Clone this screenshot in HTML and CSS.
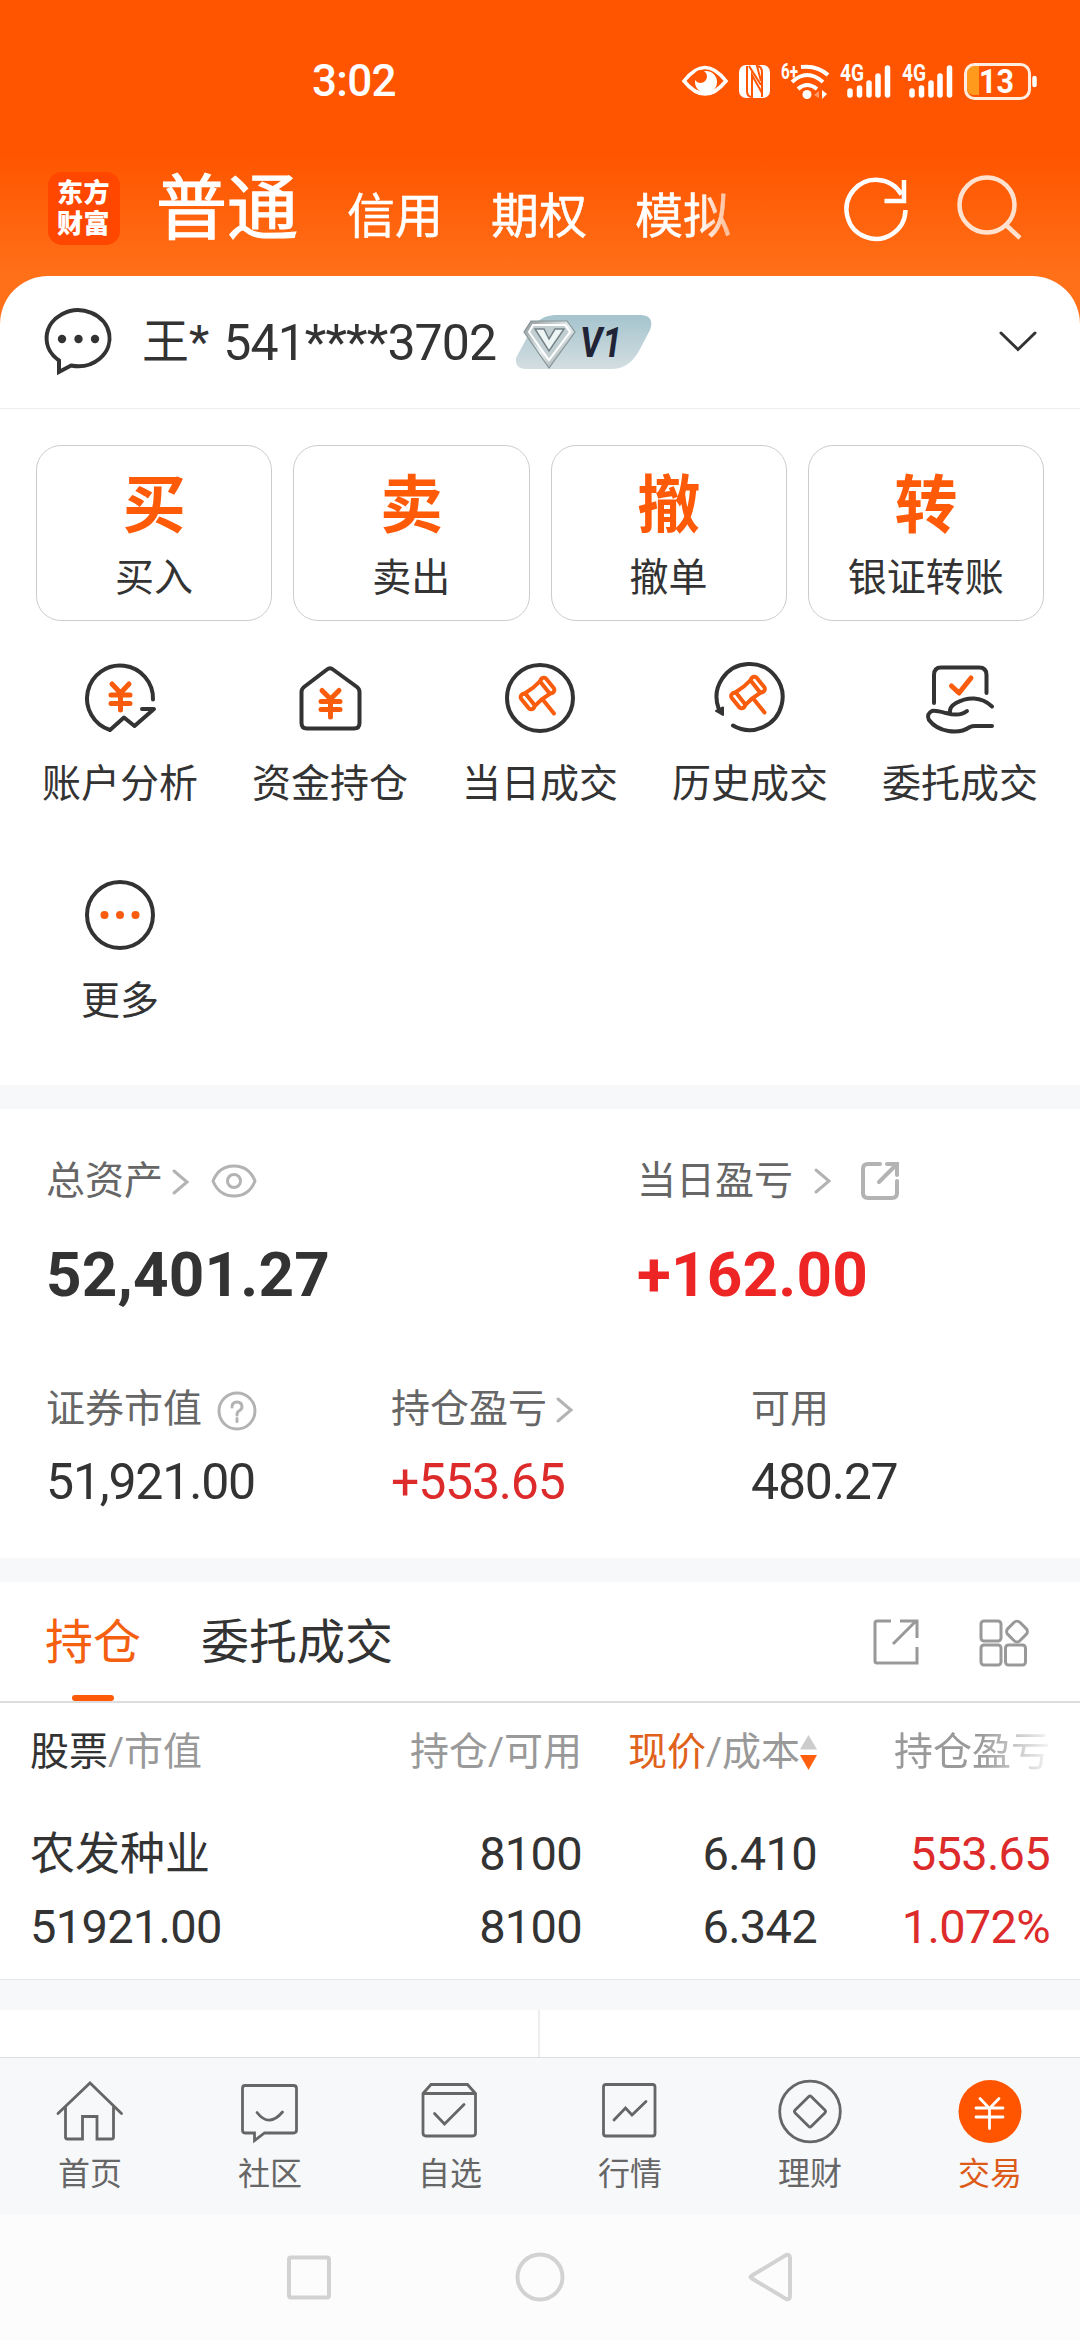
FILE: index.html
```html
<!DOCTYPE html>
<html lang="zh-CN">
<head>
  <meta charset="UTF-8" />
  <title>交易</title>
  <meta name="viewport" content="width=device-width, initial-scale=1.0" />
  <link rel="stylesheet" href="styles.css">
</head>
<body>
  <div class="app">
    <div class="status">
      <span class="time">3:02</span>
      <div class="status-icons">
        <svg width="48" height="40" viewBox="0 0 48 40"><path d="M3 20Q24-7 45 20Q24 46 3 20Z" fill="none" stroke="#fff" stroke-width="3.6"/><circle cx="25" cy="21" r="11" fill="#fff"/><circle cx="19.500" cy="15.500" r="6.500" fill="#ff5500"/></svg>
        <svg class="nfc" width="32" height="40" viewBox="0 0 32 40"><rect x="0" y="4" width="31" height="33" rx="7" fill="#fff"/><path d="M8 5V30Q8 36 13 36V14L23 32M23 36V12Q23 5 18 5L22 20M10 5L22 24" fill="none" stroke="#ff5500" stroke-width="2"/></svg>
        <svg class="wifi" width="50" height="40" viewBox="0 0 50 40"><text x="0" y="18" font-size="22" font-weight="bold" fill="#fff" textLength="17" lengthAdjust="spacingAndGlyphs">6+</text><g fill="none" stroke="#fff" stroke-width="4"><path d="M20 6Q36 4 47 14"/><path d="M11 21Q26 7 42 21"/><path d="M17 28Q26 20 36 28"/></g><circle cx="26" cy="33.500" r="4.500" fill="#fff"/><path d="M41 29v9l5-5z" fill="#fff"/><path d="M38 30v7l-5-3z" fill="#ff9a66"/></svg>
        <svg class="signal" width="51" height="40" viewBox="0 0 51 40"><text x="0" y="20" font-size="23" font-weight="bold" fill="#fff" textLength="24" lengthAdjust="spacingAndGlyphs">4G</text><path d="M10 30v4M19.500 27v7M29 22v12M38 15v19M47.500 7v27" stroke="#fff" stroke-width="5.500" stroke-linecap="round"/></svg>
        <svg class="signal" width="51" height="40" viewBox="0 0 51 40"><text x="0" y="20" font-size="23" font-weight="bold" fill="#fff" textLength="24" lengthAdjust="spacingAndGlyphs">4G</text><path d="M10 30v4M19.500 27v7M29 22v12M38 15v19M47.500 7v27" stroke="#fff" stroke-width="5.500" stroke-linecap="round"/></svg>
        <svg class="battery" width="74" height="40" viewBox="0 0 74 40"><path d="M15 5H10Q3 5 3 12V27Q3 34 10 34H15Z" fill="#ff9a1c"/><rect x="1.500" y="3.500" width="64" height="34" rx="9" fill="none" stroke="#ffeee0" stroke-width="3"/><path d="M70.500 17v7" stroke="#fff" stroke-width="4.500" stroke-linecap="round"/><text x="15" y="32" font-size="33" font-weight="bold" fill="#fff" textLength="35" lengthAdjust="spacingAndGlyphs">13</text></svg>
      </div>
    </div>

    <div class="header">
      <div class="logo">东方<br>财富</div>
      <div class="modes">
        <span class="mode on">普通</span>
        <span class="mode">信用</span>
        <span class="mode">期权</span>
        <span class="mode">模拟</span>
      </div>
      <svg class="refresh" width="72" height="72" viewBox="0 0 72 72"><path d="M65.500 37A29.500 29.500 0 1 1 61.500 21.500M64 7V28H44.500" fill="none" stroke="#fff" stroke-width="4.500"/></svg>
      <svg class="search" width="72" height="72" viewBox="0 0 72 72"><circle cx="31" cy="32" r="27.500"/><path d="M50 52L64 65"/></svg>
    </div>

    <div class="sheet">
      <div class="account">
        <svg width="72" height="72" viewBox="0 0 72 72"><path d="M16 54.500A31.500 28 0 1 1 28 59.500L16 66Z" fill="none" stroke="#333" stroke-width="4"/><g fill="#333"><circle cx="19" cy="33" r="4.200"/><circle cx="35.500" cy="33" r="4.200"/><circle cx="52" cy="33" r="4.200"/></g></svg>
        <span class="name">王*</span>
        <span class="number">541****3702</span>
        <svg class="badge" width="142" height="60" viewBox="0 0 142 60">
          <defs>
            <linearGradient id="badge" x1="0" y1="0" x2="0" y2="1"><stop offset="0" stop-color="#a5c4cd"/><stop offset="1" stop-color="#d3dee1"/></linearGradient>
            <linearGradient id="gem" x1="0" y1="0" x2="1" y2="1"><stop offset="0" stop-color="#8b9699"/><stop offset=".5" stop-color="#e8f0f1"/><stop offset="1" stop-color="#7f898c"/></linearGradient>
          </defs>
          <path d="M3 46L18 18Q26 3 44 3H128Q142 4 137 18L126 39Q116 57 98 57H13Q2 57 3 46Z" fill="url(#badge)"/>
          <path d="M18 9H54L62 20L36 56L11 20Z" fill="url(#gem)" stroke="#879397" stroke-width="1.200"/>
          <path d="M20 13H52L57 20L36 48L16 20Z" fill="#c2cfd2" stroke="#fff" stroke-width="2"/>
          <path d="M22 17H31L36 27L42 17H51L36 39Z" fill="#edf5f5" stroke="#758388" stroke-width="1.500"/>
          <text x="67" y="45" font-size="42" font-weight="bold" font-style="italic" fill="#202436" textLength="42" lengthAdjust="spacingAndGlyphs">V1</text>
        </svg>
        <svg class="down" width="40" height="24" viewBox="0 0 40 24"><path d="M3 3L20 19.500L37 3" fill="none" stroke="#333" stroke-width="3" stroke-linecap="round"/></svg>
      </div>

      <div class="actions">
        <div class="action"><b>买</b><span>买入</span></div>
        <div class="action"><b>卖</b><span>卖出</span></div>
        <div class="action"><b>撤</b><span>撤单</span></div>
        <div class="action"><b>转</b><span>银证转账</span></div>
      </div>

      <div class="tools">
        <div class="tool">
          <svg class="line" width="72" height="72" viewBox="0 0 72 72"><path d="M69 37.500A33 33 0 1 0 26 68L40 55.500L50.500 64L70 47H58"/><path class="accent yen" d="M28 22L36.500 31L45 22M36.500 31V48M27 33H46M27 41.500H46"/></svg>
          <span>账户分析</span>
        </div>
        <div class="tool">
          <svg class="line" width="72" height="72" viewBox="0 0 72 72"><path d="M33 7.500Q36 5 39 7.500L63 25Q65.500 27 65.500 30V61Q65.500 66.500 60 66.500H13Q7.500 66.500 7.500 61V30Q7.500 27 10 25Z"/><path class="accent yen" d="M28 28.500L36.500 37L45 28.500M36.500 37V55M27 39.500H46M27 47.500H46"/></svg>
          <span>资金持仓</span>
        </div>
        <div class="tool">
          <svg class="line" width="72" height="72" viewBox="0 0 72 72"><circle cx="36" cy="36" r="33"/><g class="accent" transform="translate(33.5 31.5) rotate(-39)"><rect x="-16" y="-9" width="6.500" height="18" rx="3"/><rect x="9.500" y="-9" width="6.500" height="18" rx="3"/><path d="M-10-8Q0-6.500 10-8M-10 8Q0 6.500 10 8"/></g><path class="accent" d="M39.500 38.500L50 51.500"/></svg>
          <span>当日成交</span>
        </div>
        <div class="tool">
          <svg class="line" width="72" height="72" viewBox="0 0 72 72"><path d="M19 63.500A33 33 0 1 0 4.500 46"/><path d="M2 49L9 45.500V53Z" fill="#333" stroke-width="2"/><g class="accent" transform="translate(34 30.500) rotate(-39)"><rect x="-16" y="-9" width="6.500" height="18" rx="3"/><rect x="9.500" y="-9" width="6.500" height="18" rx="3"/><path d="M-10-8Q0-6.500 10-8M-10 8Q0 6.500 10 8"/></g><path class="accent" d="M40 37.500L50.500 50.500"/></svg>
          <span>历史成交</span>
        </div>
        <div class="tool">
          <svg class="line" width="72" height="72" viewBox="0 0 72 72"><path d="M10 41V13Q10 5.500 17 5.500H55Q62.500 5.500 62.500 13V31"/><path d="M68 44.500C57 34 43 35 32 41Q25 45 26 51M43 49Q36 55 22 51C14 49 11 48 8 49Q2 52 5 58C14 70 34 73 46 65Q48 64 51 64H68"/><path class="accent yen" d="M27.500 24L35 31L47 16"/></svg>
          <span>委托成交</span>
        </div>
        <div class="tool">
          <svg class="line" width="72" height="72" viewBox="0 0 72 72"><circle cx="36" cy="36" r="33"/><g fill="#f95c0c" stroke="none"><circle cx="20.500" cy="36" r="4"/><circle cx="36" cy="36" r="4"/><circle cx="51.500" cy="36" r="4"/></g></svg>
          <span>更多</span>
        </div>
      </div>

      <div class="assets">
        <div class="totals">
          <div class="total">
            <div class="label">总资产<svg class="more" width="18" height="28" viewBox="0 0 18 28"><path d="M2 3L15 14L2 25"/></svg><svg class="eye" width="46" height="36" viewBox="0 0 46 36"><path d="M2 18Q8 3 23 3T44 18Q38 33 23 33T2 18Z"/><circle cx="23" cy="18" r="6.500"/></svg></div>
            <strong>52,401.27</strong>
          </div>
          <div class="total today">
            <div class="label">当日盈亏<svg class="more" width="18" height="28" viewBox="0 0 18 28"><path d="M2 3L15 14L2 25"/></svg><svg class="share" width="40" height="40" viewBox="0 0 40 40"><path d="M20 3H8Q3 3 3 8V32Q3 37 8 37H32Q37 37 37 32V20M19 21L36 4M27 3H37V14"/></svg></div>
            <strong class="red">+162.00</strong>
          </div>
        </div>
        <div class="details">
          <div>
            <div class="label">证券市值<svg class="help" width="40" height="40" viewBox="0 0 40 40"><circle cx="20" cy="20" r="18"/><path d="M15 16Q15 11 20 11Q25 11 25 16Q25 18 22 20Q20 21 20 24M20 27.500V30.500"/></svg></div>
            <span class="value">51,921.00</span>
          </div>
          <div>
            <div class="label">持仓盈亏<svg class="more" width="18" height="28" viewBox="0 0 18 28"><path d="M2 3L15 14L2 25"/></svg></div>
            <span class="value red">+553.65</span>
          </div>
          <div>
            <div class="label">可用</div>
            <span class="value">480.27</span>
          </div>
        </div>
      </div>

      <div class="tabs">
        <span class="tab on">持仓</span>
        <span class="tab">委托成交</span>
        <svg class="open" width="48" height="48" viewBox="0 0 48 48"><path d="M19 3H5Q3 3 3 5V43Q3 45 5 45H45V29M21 26L44 3M28 3H45V20"/></svg>
        <svg class="grid" width="52" height="52" viewBox="0 0 52 52"><rect x="3" y="4" width="20" height="20" rx="3"/><rect x="3" y="28" width="20" height="20" rx="3"/><rect x="27.500" y="28" width="20" height="20" rx="3"/><rect x="30.500" y="6" width="17" height="17" rx="4" transform="rotate(45 39 14.5)"/></svg>
      </div>

      <div class="holdings">
        <div class="row head">
          <span><i>股票</i>/市值</span>
          <span>持仓/可用</span>
          <span class="price"><em>现价</em>/成本<svg width="17" height="36" viewBox="0 0 17 36"><path d="M8.500 1L17 15.500H0Z" fill="#ccc"/><path d="M8.500 36L17 21H0Z" fill="#ff6010"/></svg></span>
          <span class="fade">持仓盈亏</span>
        </div>
        <div class="row first"><span class="stock">农发种业</span><span>8100</span><span>6.410</span><span class="red">553.65</span></div>
        <div class="row"><span>51921.00</span><span>8100</span><span>6.342</span><span class="red">1.072%</span></div>
      </div>
      <div class="split"><div></div><div></div></div>
    </div>

    <div class="tabbar">
      <div class="nav">
        <svg width="72" height="72" viewBox="0 0 72 72"><path d="M4 38.500L36 8L67.500 38.500M11.500 32V62Q11.500 64 13.500 64H28.500V41.500H43V64H57.500Q59.500 64 59.500 62V32"/></svg>
        <span>首页</span>
      </div>
      <div class="nav">
        <svg width="72" height="72" viewBox="0 0 72 72"><path d="M11 10.500H59.500Q62.500 10.500 62.500 13.500V55Q62.500 58 59.500 58H30.500L20.500 65.500V58H11Q8.500 58 8.500 55V13.500Q8.500 10.500 11 10.500Z"/><path d="M23 37.500Q35 53 48.500 37"/></svg>
        <span>社区</span>
      </div>
      <div class="nav">
        <svg width="72" height="72" viewBox="0 0 72 72"><path d="M9 18.500L17 9.500H53.500L61.500 18.500V58Q61.500 61 58.500 61H12Q9 61 9 58ZM9 18.500H61.500M20.500 38.500L30.500 49L50 29.500"/></svg>
        <span>自选</span>
      </div>
      <div class="nav">
        <svg width="72" height="72" viewBox="0 0 72 72"><rect x="9.500" y="9.500" width="51.500" height="51.500" rx="2.500"/><path d="M20 45L31.500 33L38 40L52 26.500"/></svg>
        <span>行情</span>
      </div>
      <div class="nav">
        <svg width="72" height="72" viewBox="0 0 72 72"><circle cx="36" cy="36.500" r="30.300"/><rect x="24.500" y="25" width="23" height="23" rx="2" transform="rotate(45 36 36.5)"/></svg>
        <span>理财</span>
      </div>
      <div class="nav on">
        <svg width="72" height="72" viewBox="0 0 72 72"><circle cx="36" cy="36.500" r="31.500" fill="#ff5500" stroke="none"/><path d="M26 23.500L35.500 33.500L45 23.500M35.500 33.500V53.500M22 33H49M22 42H49" stroke="#fff"/></svg>
        <span>交易</span>
      </div>
    </div>

    <div class="system">
      <svg width="52" height="52" viewBox="0 0 52 52"><rect x="6" y="6.500" width="40" height="40" rx="2"/></svg>
      <svg width="52" height="52" viewBox="0 0 52 52"><circle cx="26" cy="26" r="22.500"/></svg>
      <svg width="52" height="52" viewBox="0 0 52 52"><path d="M7 24.500L41 4Q45 3 45 7V45Q45 49 41 48L7 27.500Q4 26 7 24.500Z"/></svg>
    </div>
  </div>
</body>
</html>
```
FILE: styles.css
```css
* {
  box-sizing: border-box;
}

html, body {
  margin: 0;
  padding: 0;
}

body {
  width: 1080px;
  height: 2340px;
  font-family: Roboto, "Noto Sans CJK SC", sans-serif;
  font-size: 39px;
  line-height: 1.2;
  color: #333;
  overflow: hidden;
}

svg {
  display: block;
  flex: none;
  overflow: visible;
}

i, em {
  font-style: normal;
}

.app {
  display: flex;
  flex-direction: column;
  height: 2340px;
  background: linear-gradient(#ff5500 155px, #ff7018 276px, #ff7018);
}

/* status bar */
.status {
  display: flex;
  justify-content: space-between;
  align-items: center;
  height: 140px;
  padding: 22px 42px 0 312px;
  color: #fff;
}

.time {
  font-size: 44px;
  font-weight: 500;
  letter-spacing: -0.7px;
}

.status-icons {
  display: flex;
}

.nfc, .wifi {
  margin-left: 10px;
}

.signal {
  margin-left: 9px;
}

.signal + .signal {
  margin-left: 11px;
}

.battery {
  margin-left: 11px;
}

/* header */
.header {
  display: flex;
  align-items: center;
  height: 136px;
  padding: 0 46px 0 48px;
  color: #fff;
}

.logo {
  width: 72px;
  height: 73px;
  padding: 6px 0 0 9px;
  border-radius: 14px;
  background: #ff4700;
  font-size: 26px;
  font-weight: 900;
  line-height: 31px;
  letter-spacing: 0.5px;
}

.modes {
  display: flex;
  align-items: baseline;
  width: 681px;
  margin-left: 36px;
  padding-top: 9px;
  gap: 48px;
  font-size: 48px;
  line-height: 84px;
  -webkit-mask-image: linear-gradient(to right, #000 542px, rgba(0, 0, 0, 0.5) 578px);
  mask-image: linear-gradient(to right, #000 542px, rgba(0, 0, 0, 0.5) 578px);
}

.mode {
  padding-top: 3px;
  -webkit-text-stroke: 0.5px #fff;
}

.mode.on {
  margin-right: 1px;
  padding-top: 0;
  font-size: 71px;
  -webkit-text-stroke: 1.2px #fff;
}

.refresh {
  margin: 2px 0 0 3px;
}

.search {
  margin: 2px 0 0 44px;
  fill: none;
  stroke: #ffe1cf;
  stroke-width: 4.5;
}

/* white sheet */
.sheet {
  height: 1781px;
  border-radius: 48px 48px 0 0;
  background: #fff;
  overflow: hidden;
}

.account {
  display: flex;
  align-items: center;
  height: 133px;
  padding: 0 42px 0 43px;
  border-bottom: 1px solid #eee;
  font-size: 50px;
}

.name {
  margin-left: 27px;
  font-size: 47px;
}

.number {
  margin: 2px 0 0 14px;
  letter-spacing: -0.9px;
}

.badge {
  margin-left: 17px;
}

.down {
  margin-left: auto;
}

.actions {
  display: grid;
  grid-template-columns: repeat(4, 1fr);
  gap: 21px;
  padding: 36px 36px 0;
}

.action {
  display: flex;
  flex-direction: column;
  align-items: center;
  height: 176px;
  padding-top: 18px;
  border: 1px solid #ccc;
  border-radius: 25px;
}

.action b {
  font-size: 63px;
  line-height: 84px;
  color: #ff5a08;
}

.action span {
  line-height: 60px;
}

.tools {
  display: grid;
  grid-template-columns: repeat(5, 1fr);
  padding: 41px 15px 0;
  height: 464px;
}

.tool {
  display: flex;
  flex-direction: column;
  align-items: center;
  height: 217px;
}

.tool span {
  margin-top: 21px;
  line-height: 58px;
}

.line {
  fill: none;
  stroke: #333;
  stroke-width: 4;
  stroke-linecap: round;
  stroke-linejoin: round;
}

.accent {
  stroke: #f95c0c;
}

.yen {
  stroke-width: 5;
}

/* assets */
.assets {
  height: 497px;
  border: solid #f7f8fa;
  border-width: 24px 0;
}

.label {
  display: flex;
  align-items: center;
  height: 48px;
  color: #666;
}

.label svg {
  fill: none;
  stroke: #b3b3b3;
  stroke-width: 3;
  stroke-linecap: round;
}

.more {
  margin: 2px 0 0 9px;
}

.eye {
  margin-left: 21px;
}

.today .more {
  margin: 0 0 0 21px;
}

.label .share {
  margin-left: 28px;
  stroke-width: 4;
}

.help {
  margin: 3px 0 0 15px;
}

.totals {
  display: grid;
  grid-template-columns: 591px 1fr;
  padding: 48px 0 0 46px;
}

.total strong {
  display: block;
  margin-top: 33px;
  font-size: 62px;
  line-height: 74px;
  letter-spacing: 0.2px;
}

.details {
  display: grid;
  grid-template-columns: 345px 360px 1fr;
  padding: 73px 0 0 46px;
}

.value {
  display: block;
  margin-top: 19px;
  font-size: 50px;
  line-height: 60px;
  letter-spacing: -1.2px;
}

.red {
  color: #dd2b2b;
}

strong.red {
  color: #ee2525;
}

/* tabs */
.tabs {
  display: flex;
  align-items: center;
  height: 121px;
  padding: 0 49px 0 45px;
  border-bottom: 2px solid #ddd;
  font-size: 48px;
}

.tab {
  position: relative;
  margin: 2px 60px 0 0;
}

.tab.on {
  color: #f4600f;
}

.tab.on::after {
  content: "";
  position: absolute;
  left: 27px;
  bottom: -30px;
  width: 42px;
  height: 6px;
  border-radius: 3px;
  background: #ff5a08;
}

.open, .grid {
  fill: none;
  stroke: #999;
  stroke-width: 3;
}

.open {
  margin-left: auto;
}

.grid {
  margin: 3px 1px 0 58px;
}

/* holdings */
.holdings {
  height: 277px;
  padding: 13px 30px 0 30px;
  border-bottom: 1px solid #eaeaea;
}

.row {
  display: grid;
  grid-template-columns: 302px 250px 235px 1fr;
  height: 73px;
  align-items: center;
  text-align: right;
  font-size: 47px;
  letter-spacing: -0.7px;
}

.row span:first-child {
  text-align: left;
}

.row.head {
  font-size: 39px;
  letter-spacing: 0;
  color: #999;
}

.row.first {
  margin-top: 29px;
}

.row .stock {
  font-size: 45px;
  letter-spacing: 0;
}

.head i {
  color: #333;
}

.head em {
  color: #e0611b;
}

.price {
  display: flex;
  justify-content: flex-end;
  align-items: center;
}

.fade {
  -webkit-mask-image: linear-gradient(to left, rgba(0, 0, 0, 0.1), #000 70px);
  mask-image: linear-gradient(to left, rgba(0, 0, 0, 0.1), #000 70px);
}

.split {
  display: grid;
  grid-template-columns: 1fr 1fr;
  border-top: 30px solid #f7f8fa;
  height: 78px;
}

.split div:first-child {
  border-right: 2px solid #eee;
}

/* bottom bar */
.tabbar {
  display: grid;
  grid-template-columns: repeat(6, 1fr);
  height: 157px;
  padding-top: 17px;
  border-top: 1px solid #ddd;
  background: #f7f8fa;
}

.nav {
  display: flex;
  flex-direction: column;
  align-items: center;
  font-size: 32px;
  line-height: 54px;
  color: #666;
}

.nav svg {
  fill: none;
  stroke: #666;
  stroke-width: 2.8;
  stroke-linecap: round;
}

.nav.on {
  color: #dc5b18;
}

.system {
  display: flex;
  justify-content: center;
  gap: 179px;
  height: 126px;
  padding-top: 37px;
  background: #fcfcfc;
}

.system svg {
  fill: none;
  stroke: #d2d2d2;
  stroke-width: 4;
}
```
